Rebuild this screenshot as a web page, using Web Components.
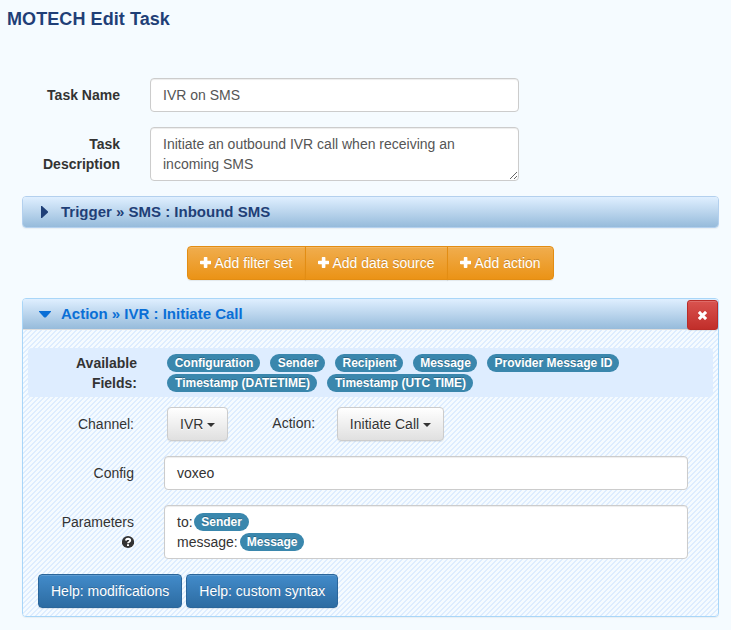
<!DOCTYPE html>
<html lang="en">
<head>
<meta charset="utf-8">
<title>MOTECH Edit Task</title>
<style>
html,body{margin:0;padding:0}
body{background:#f5fbff;font:14px/20px "Liberation Sans",Arial,sans-serif;color:#333;width:731px;height:630px;overflow:hidden}
</style>
</head>
<body>
<edit-task-page></edit-task-page>
<script>
const define = (name, html) => {
  const tpl = document.createElement('template');
  tpl.innerHTML = html;
  customElements.define(name, class extends HTMLElement {
    constructor() {
      super();
      this.attachShadow({ mode: 'open' }).append(tpl.content.cloneNode(true));
    }
  });
};

// Label column on the left, control column on the right
define('form-row', `
<style>
:host{display:grid;grid-template-columns:var(--label,120px) 1fr;column-gap:var(--gap,30px);align-items:start}
.label{text-align:right;padding-top:var(--label-top,7px)}
</style>
<div class="label"><slot name="label"></slot></div><div><slot></slot></div>`);

define('text-box', `
<style>
:host{display:block;box-sizing:border-box;border:1px solid #ccc;border-radius:4px;background:#fff;padding:6px 12px;min-height:34px;color:#555;box-shadow:inset 0 1px 1px rgba(0,0,0,.075)}
:host([multiline]){height:54px;overflow:auto;resize:vertical}
:host([dark]){color:#333}
</style><slot></slot>`);

define('field-badge', `
<style>
:host{display:inline-flex;justify-content:center;box-sizing:border-box;height:18px;line-height:18px;padding:0 6px 0 7px;border-radius:9px;background:#3a87ad;color:#fff;font-size:12px;font-weight:bold;white-space:nowrap;text-shadow:0 -1px 0 rgba(0,0,0,.25);vertical-align:top}
</style><slot></slot>`);

define('push-button', `
<style>
:host{display:inline-flex;box-sizing:border-box;height:34px;align-items:center;gap:4px;padding:0 12px;border:1px solid #ccc;border-radius:4px;background:linear-gradient(#fff,#e0e0e0);color:#333;white-space:nowrap;box-shadow:inset 0 1px 0 rgba(255,255,255,.15),0 1px 1px rgba(0,0,0,.075);text-shadow:0 1px 0 #fff}
:host([kind=primary]){background:linear-gradient(#428bca,#2d6ca2);border-color:#2b669a;color:#fff;text-shadow:0 -1px 0 rgba(0,0,0,.2)}
:host([kind=warning]){background:linear-gradient(#f0ad4e,#eb9316);border-color:#e38d13;color:#fff;text-shadow:0 -1px 0 rgba(0,0,0,.2)}
:host([kind=danger]){background:linear-gradient(#d9534f,#c12e2a);border-color:#b92c28;color:#fff}
</style><slot></slot>`);

define('caret-down', `
<style>:host{display:block;border:4px solid transparent;border-top-color:currentColor;border-bottom:0;margin-top:1px}</style>`);

define('plus-icon', `
<style>:host{display:block;width:11px;height:11px;margin:-1px -.5px 0 0}svg{display:block}</style>
<svg width="11" height="11" viewBox="0 0 11 11" fill="#fff"><path d="M4.500 0h2.200q.7 0 .7.7V3.700h3q.7 0 .7.7v2.200q0 .7-.7.7h-3v3q0 .7-.7.7H4.500q-.7 0-.7-.7v-3H.7q-.7 0-.7-.7V4.400q0-.7.7-.7h3.100V.7q0-.7.7-.7z"/></svg>`);

define('close-icon', `
<style>:host{display:block}svg{display:block}</style>
<svg width="9" height="9" viewBox="0 0 9 9"><path d="M2 2l5 5M7 2L2 7" stroke="#fff" stroke-width="3.100" stroke-linecap="square"/></svg>`);

define('help-icon', `
<style>:host{display:block}svg{display:block;margin-left:auto}</style>
<svg width="12" height="20" viewBox="0 0 12 20"><circle cx="6" cy="10" r="6.100" fill="#333"/><path d="M3.700 8.500Q4.300 6.700 6 6.700Q8.200 6.800 8.200 8.400Q8.200 9.300 7 10Q6 10.500 6 11.300" fill="none" stroke="#fff" stroke-width="1.900"/><path d="M5 12.200h2v1.900H5z" fill="#fff"/></svg>`);

define('panel-heading', `
<style>
:host{display:flex;box-sizing:border-box;height:30px;align-items:center;background:linear-gradient(#dfefff,#96bbdb);color:#1f3f77;font-size:15px;font-weight:bold;padding-left:15px}
.icon{width:14px;height:14px;margin-right:9px}
.text{flex:1}
svg{display:block}
.down,:host([open]) .right{display:none}
:host([open]) .down{display:block}
:host([open]){color:#0a6fd6}
</style>
<div class="icon"><svg width="14" height="14" viewBox="0 0 14 14" fill="currentColor"><path class="right" d="M3 1h1L10 6.500v1L4 13H3z"/><path class="down" d="M1 4h12v.7L8 10.200q-1 .8-2 0L1 4.700z"/></svg></div>
<div class="text"><slot></slot></div><slot name="tool"></slot>`);

define('task-panel', `
<style>
:host{display:block;box-sizing:border-box;border:1px solid #b3d0ee;border-radius:4px;overflow:hidden;box-shadow:0 1px 1px rgba(0,0,0,.05)}
:host([open]){border-color:#a9d6f8}
</style><slot></slot>`);

define('action-form', `
<style>
:host{display:flow-root;height:287px;border-top:1px solid #ddd;box-sizing:border-box;background:linear-gradient(135deg,#f5fbff 25%,#deedff 25% 50%,#f5fbff 50% 75%,#deedff 75%) 0 0/5px 5px}
.fields{margin:18px 5px 0;background:#deedff;border-radius:4px;height:49px;box-sizing:border-box;padding-top:5px;--label:109px;--label-top:0px}
.fields b{display:block}
.badges{display:flex;flex-wrap:wrap;gap:2px 10px;padding-top:1px;width:480px}
.channel{display:flex;margin-top:10px;height:34px}
.channel .l1{width:111px;text-align:right;padding-top:7px;margin-right:33px}
.channel .l2{padding-top:6px;margin:0 22px 0 44px;width:43px}
.channel .initiate{width:107px;padding:0 11.500px}
.row{margin:15px 30px 0 0;--label:111px;--gap:30px}
.params{height:54px}
.line{display:flex;height:20px}
.line field-badge{margin:1px 0 0 2px}
.line:first-child field-badge{margin-left:1px}
.w55{width:55px}.w64{width:64px}.w68{width:68px}.w93{width:93px}.w132{width:132px}.w146{width:146px}.w150{width:150px}
.buttons{display:flex;gap:4px;margin:15px 0 0 15px}
</style>
<form-row class="fields"><b slot="label">Available<br>Fields:</b>
<div class="badges"><field-badge class="w93">Configuration</field-badge><field-badge class="w55">Sender</field-badge><field-badge class="w68">Recipient</field-badge><field-badge class="w64">Message</field-badge><field-badge class="w132">Provider Message ID</field-badge><field-badge class="w150">Timestamp (DATETIME)</field-badge><field-badge class="w146">Timestamp (UTC TIME)</field-badge></div></form-row>
<div class="channel"><div class="l1">Channel:</div><push-button>IVR<caret-down></caret-down></push-button><div class="l2">Action:</div><push-button class="initiate">Initiate Call<caret-down></caret-down></push-button></div>
<form-row class="row"><span slot="label">Config</span><text-box dark>voxeo</text-box></form-row>
<form-row class="row"><span slot="label">Parameters<help-icon></help-icon></span><text-box dark class="params"><div class="line">to:<field-badge class="w55">Sender</field-badge></div><div class="line">message:<field-badge class="w64">Message</field-badge></div></text-box></form-row>
<div class="buttons"><push-button kind="primary">Help: modifications</push-button><push-button kind="primary">Help: custom syntax</push-button></div>`);

define('edit-task-page', `
<style>
:host{display:flow-root}
h1{font-size:18px;line-height:20px;letter-spacing:.08px;margin:9px 0 49px 7px;color:#1f3f77}
form-row{width:519px;margin-bottom:15px}
task-panel{margin:0 12px 0 22px}
.toolbar{display:flex;margin:18px 0 18px 187px}
.toolbar push-button+push-button{margin-left:-1px}
.toolbar push-button:first-child{width:119px;border-radius:4px 0 0 4px}
.toolbar push-button:nth-child(2){width:143px;border-radius:0}
.toolbar push-button:last-child{width:107px;border-radius:0 4px 4px 0}
.close{width:31px;height:30px;padding:0;justify-content:center;margin-top:2px;border-radius:3px;position:relative}
</style>
<h1>MOTECH Edit Task</h1>
<form-row><b slot="label">Task Name</b><text-box>IVR on SMS</text-box></form-row>
<form-row><b slot="label">Task<br>Description</b><text-box multiline>Initiate an outbound IVR call when receiving an incoming SMS</text-box></form-row>
<task-panel><panel-heading>Trigger » SMS : Inbound SMS</panel-heading></task-panel>
<div class="toolbar"><push-button kind="warning"><plus-icon></plus-icon>Add filter set</push-button><push-button kind="warning"><plus-icon></plus-icon>Add data source</push-button><push-button kind="warning"><plus-icon></plus-icon>Add action</push-button></div>
<task-panel open><panel-heading open>Action » IVR : Initiate Call<push-button slot="tool" class="close" kind="danger"><close-icon></close-icon></push-button></panel-heading><action-form></action-form></task-panel>`);
</script>
</body>
</html>
